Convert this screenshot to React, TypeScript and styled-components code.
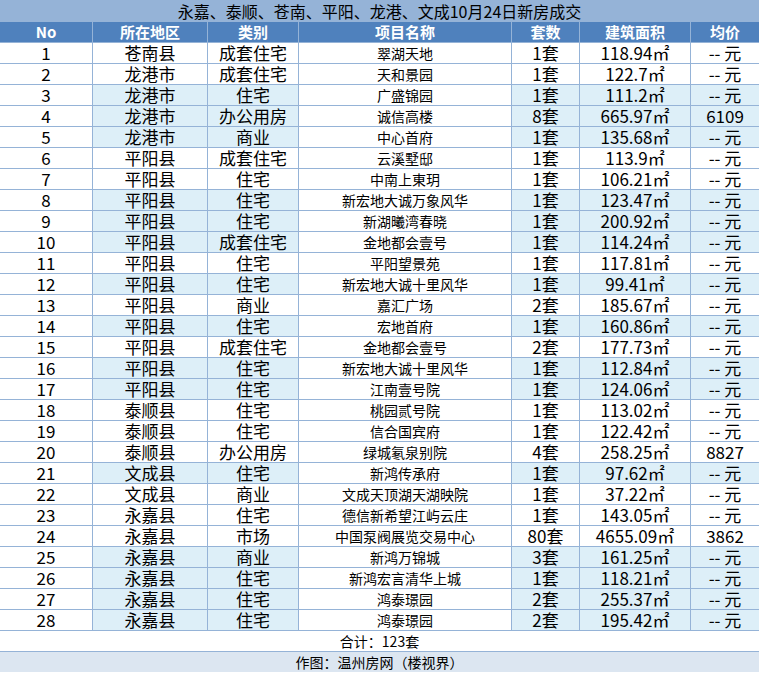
import React from 'react';
import styled, { createGlobalStyle } from 'styled-components';

const Global = createGlobalStyle`
  body { margin: 0; background: #fff; font-family: "Liberation Sans", "Noto Sans CJK SC", sans-serif; }
`;

const cols = '92px 115px 91px 213px 68px 111px 69px';

const Sheet = styled.div`
  width: 759px;
  height: 673px;
  display: flex;
  flex-direction: column;
  color: #000;
`;

const Title = styled.div`
  height: 22px;
  background: #95b3d7;
  font-size: 16px;
  line-height: 22px;
  text-align: center;
  font-family: "Noto Sans CJK SC", sans-serif;
`;

const Grid = styled.div`
  display: grid;
  grid-template-columns: ${cols};
`;

const Head = styled.div`
  height: 20px;
  line-height: 20px;
  background: #4f81bd;
  color: #fff;
  font-weight: bold;
  font-size: 15px;
  text-align: center;
  border-left: 1px solid #95b3d7;
  font-family: "Noto Sans CJK SC", sans-serif;
  &:first-child { border-left: none; }
`;

const Cell = styled.div<{ $blue?: boolean; $small?: boolean; $first?: boolean }>`
  height: 20px;
  line-height: 20px;
  border-top: 1px solid #95b3d7;
  border-left: ${({ $first }) => ($first ? 'none' : '1px solid #95b3d7')};
  background: ${({ $blue }) => ($blue ? '#ddeff8' : '#fff')};
  font-size: ${({ $small }) => ($small ? '14px' : '17px')};
  text-align: center;
  white-space: nowrap;
  overflow: hidden;
  font-family: "Noto Sans CJK SC", sans-serif;
`;

const Wide = styled.div<{ $bg: string }>`
  height: 20px;
  line-height: 20px;
  border-top: 1px solid #95b3d7;
  background: ${({ $bg }) => $bg};
  text-align: center;
  font-size: 14px;
  font-family: "Noto Sans CJK SC", sans-serif;
`;

const rows: [string, string, string, string, string, string][] = [
  ['苍南县', '成套住宅', '翠湖天地', '1', '118.94', ''],
  ['龙港市', '成套住宅', '天和景园', '1', '122.7', ''],
  ['龙港市', '住宅', '广盛锦园', '1', '111.2', ''],
  ['龙港市', '办公用房', '诚信高楼', '8', '665.97', '6109'],
  ['龙港市', '商业', '中心首府', '1', '135.68', ''],
  ['平阳县', '成套住宅', '云溪墅邸', '1', '113.9', ''],
  ['平阳县', '住宅', '中南上東玥', '1', '106.21', ''],
  ['平阳县', '住宅', '新宏地大诚万象风华', '1', '123.47', ''],
  ['平阳县', '住宅', '新湖曦湾春晓', '1', '200.92', ''],
  ['平阳县', '成套住宅', '金地都会壹号', '1', '114.24', ''],
  ['平阳县', '住宅', '平阳望景苑', '1', '117.81', ''],
  ['平阳县', '住宅', '新宏地大诚十里风华', '1', '99.41', ''],
  ['平阳县', '商业', '嘉汇广场', '2', '185.67', ''],
  ['平阳县', '住宅', '宏地首府', '1', '160.86', ''],
  ['平阳县', '成套住宅', '金地都会壹号', '2', '177.73', ''],
  ['平阳县', '住宅', '新宏地大诚十里风华', '1', '112.84', ''],
  ['平阳县', '住宅', '江南壹号院', '1', '124.06', ''],
  ['泰顺县', '住宅', '桃园贰号院', '1', '113.02', ''],
  ['泰顺县', '住宅', '信合国宾府', '1', '122.42', ''],
  ['泰顺县', '办公用房', '绿城氡泉别院', '4', '258.25', '8827'],
  ['文成县', '住宅', '新鸿传承府', '1', '97.62', ''],
  ['文成县', '商业', '文成天顶湖天湖映院', '1', '37.22', ''],
  ['永嘉县', '住宅', '德信新希望江屿云庄', '1', '143.05', ''],
  ['永嘉县', '市场', '中国泵阀展览交易中心', '80', '4655.09', '3862'],
  ['永嘉县', '商业', '新鸿万锦城', '3', '161.25', ''],
  ['永嘉县', '住宅', '新鸿宏言清华上城', '1', '118.21', ''],
  ['永嘉县', '住宅', '鸿泰璟园', '2', '255.37', ''],
  ['永嘉县', '住宅', '鸿泰璟园', '2', '195.42', ''],
];

const blueRows = new Set([3, 4, 5, 8, 9, 10, 12, 14, 16, 17, 21, 25, 26, 27, 28]);

export default function App() {
  return (
    <Sheet>
      <Global />
      <Title>永嘉、泰顺、苍南、平阳、龙港、文成10月24日新房成交</Title>
      <Grid>
        {['No', '所在地区', '类别', '项目名称', '套数', '建筑面积', '均价'].map((h) => (
          <Head key={h}>{h}</Head>
        ))}
        {rows.map((r, i) => {
          const b = blueRows.has(i + 1);
          return (
            <React.Fragment key={i}>
              <Cell $first>{i + 1}</Cell>
              <Cell $blue={b}>{r[0]}</Cell>
              <Cell $blue={b}>{r[1]}</Cell>
              <Cell $small>{r[2]}</Cell>
              <Cell $blue={b}>{r[3]}套</Cell>
              <Cell $blue={b}>{r[4]}㎡</Cell>
              <Cell $blue={b}>{r[5] ? r[5] : '-- 元'}</Cell>
            </React.Fragment>
          );
        })}
      </Grid>
      <Wide $bg="#fff">合计：123套</Wide>
      <Wide $bg="#dce6f1">作图：温州房网（楼视界）</Wide>
    </Sheet>
  );
}
